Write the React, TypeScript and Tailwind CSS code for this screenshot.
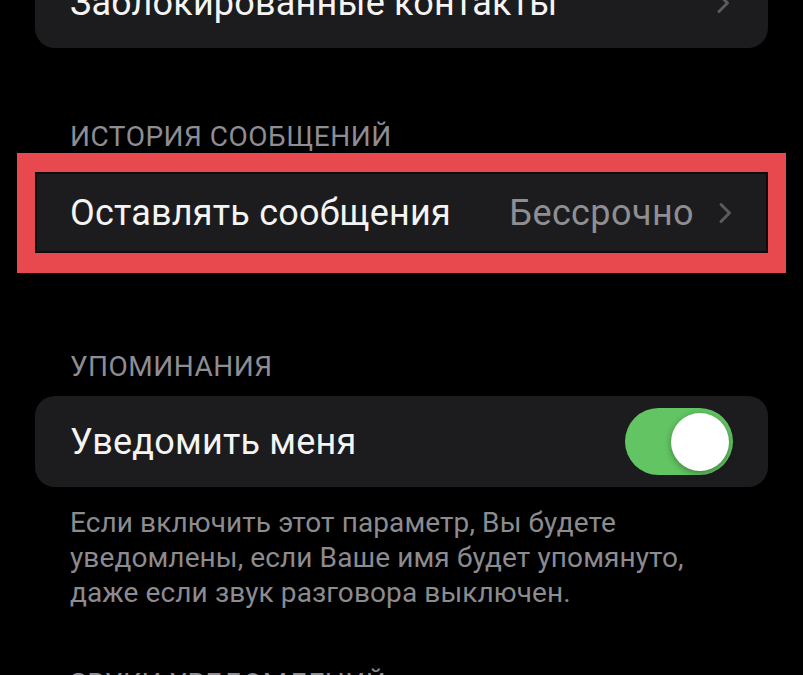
import React from "react";

const font = { fontFamily: "Roboto, 'Noto Sans', sans-serif" };

function Chevron({ className = "" }: { className?: string }) {
  return (
    <svg viewBox="0 0 14 22" className={className} fill="none">
      <path d="M3 2.5 L11.5 11 L3 19.5" stroke="currentColor" strokeWidth="3" strokeLinecap="round" strokeLinejoin="round" />
    </svg>
  );
}

function Toggle({ on }: { on: boolean }) {
  return (
    <div
      className={
        on
          ? "flex h-[67px] w-[108px] items-center justify-end rounded-full bg-[#62c462] px-[4px]"
          : "flex h-[67px] w-[108px] items-center justify-start rounded-full bg-[#39393d] px-[4px]"
      }
    >
      <div className="h-[58px] w-[58px] rounded-full bg-white shadow-[0_2px_6px_rgba(0,0,0,0.35)]" />
    </div>
  );
}

function SectionHeader({ children, className = "" }: { children: React.ReactNode; className?: string }) {
  return (
    <div className={"pl-[35px] text-[28px] leading-[32px] tracking-[0.5px] text-[#8d8d93] uppercase " + className}>
      {children}
    </div>
  );
}

export default function App() {
  return (
    <div className="h-[675px] w-full overflow-hidden bg-black px-[35px]" style={font}>
      {/* blocked contacts row, scrolled mostly off the top */}
      <div className="mt-[-42px] flex h-[90px] items-center justify-between rounded-[20px] bg-[#1c1c1e] pl-[35px] pr-[38px]">
        <span className="text-[36px] tracking-[0.2px] text-[#f4f4f4]">Заблокированные контакты</span>
        <Chevron className="h-[22px] w-[14px] text-[#5b5b5f]" />
      </div>

      <SectionHeader className="mt-[73px]">История сообщений</SectionHeader>

      {/* highlighted row */}
      <div className="mx-[-18px] mt-0 bg-[#e8494f] px-[18px] pt-[19px] pb-[20px]">
        <div className="flex h-[81px] items-center justify-between border-2 border-[#0d0d0d] bg-[#1c1c1e] pl-[33px] pr-[34px]">
          <span className="text-[36px] tracking-[0.2px] text-[#f4f4f4]">Оставлять сообщения</span>
          <div className="flex items-center gap-[24px]">
            <span className="text-[36px] tracking-[0.4px] text-[#8e8e93]">Бессрочно</span>
            <Chevron className="h-[22px] w-[14px] text-[#5b5b5f]" />
          </div>
        </div>
      </div>

      <SectionHeader className="mt-[78px]">Упоминания</SectionHeader>

      <div className="mt-[13px] flex h-[91px] items-center justify-between rounded-[20px] bg-[#1c1c1e] pl-[35px] pr-[35px]">
        <span className="text-[36px] tracking-[0.2px] text-[#f4f4f4]">Уведомить меня</span>
        <Toggle on />
      </div>

      <p className="mt-[18px] whitespace-nowrap pl-[35px] text-[28px] leading-[35px] tracking-[0.1px] text-[#8b8b90]">
        Если включить этот параметр, Вы будете
        <br />
        уведомлены, если Ваше имя будет упомянуто,
        <br />
        даже если звук разговора выключен.
      </p>

      <SectionHeader className="mt-[58px]">Звуки уведомлений</SectionHeader>
    </div>
  );
}
